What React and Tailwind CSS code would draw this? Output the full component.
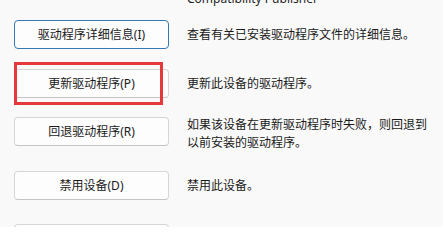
export default function App() {
  const font = { fontFamily: '"Noto Sans", "Noto Sans CJK SC", sans-serif' };
  const btn =
    "w-[155px] h-[29px] shrink-0 rounded-[4px] bg-[#fdfdfd] border border-[#d6d6d6] border-b-[#c4c4c4] flex items-center justify-center text-[12px] text-[#1b1b1b] leading-none";
  return (
    <div
      className="relative w-[443px] h-[227px] overflow-hidden bg-[#f9f9f9] text-[#1a1a1a]"
      style={font}
    >
      <div className="absolute left-[187px] top-[-10px] text-[12px] leading-[18px] text-[#1f1f1f]">
        Compatibility Publisher
      </div>
      <div className="flex flex-col pl-[14px] pt-[20px]">
        <div className="flex items-center h-[29px]">
          <div className={btn + " !border-[#3577b0]"}>驱动程序详细信息(I)</div>
          <div className="ml-[18px] text-[12px] leading-[18px]">查看有关已安装驱动程序文件的详细信息。</div>
        </div>
        <div className="flex items-center h-[29px] mt-[20px]">
          <div className={btn}>更新驱动程序(P)</div>
          <div className="ml-[18px] text-[12px] leading-[18px]">更新此设备的驱动程序。</div>
        </div>
        <div className="flex items-start mt-[19px] h-[35px]">
          <div className={btn}>回退驱动程序(R)</div>
          <div className="ml-[18px] mt-[-1px] w-[240px] text-[12px] leading-[18px]">
            如果该设备在更新驱动程序时失败，则回退到以前安装的驱动程序。
          </div>
        </div>
        <div className="flex items-center h-[29px] mt-[19px]">
          <div className={btn}>禁用设备(D)</div>
          <div className="ml-[18px] text-[12px] leading-[18px]">禁用此设备。</div>
        </div>
        <div className="flex items-center h-[29px] mt-[24px]">
          <div className={btn}></div>
        </div>
      </div>
      <div className="absolute left-[14px] top-[62px] w-[149px] h-[43px] border-[3px] border-[#e5383d]" />
    </div>
  );
}
